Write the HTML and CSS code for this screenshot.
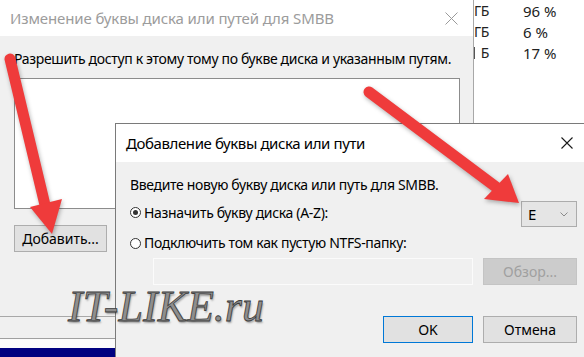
FILE: index.html
```html
<!DOCTYPE html>
<html lang="ru">
<head>
  <meta charset="UTF-8">
  <meta name="viewport" content="width=device-width, initial-scale=1.0">
  <title>Добавление буквы диска или пути</title>
  <link rel="stylesheet" href="styles.css">
</head>
<body>
  <div class="desk">
    <!-- Таблица дисков на заднем плане -->
    <div class="disk-table">
      <div class="disk-row"><span class="size">ГБ</span><span class="pct">96 %</span></div>
      <div class="disk-row"><span class="size">ГБ</span><span class="pct">6 %</span></div>
      <div class="disk-row"><span class="size cut">Б</span><span class="pct">17 %</span></div>
    </div>

    <div class="desk-bottom">
      <div class="strip-gray"></div>
      <div class="strip-line"></div>
      <div class="strip-white"></div>
      <div class="strip-navy"></div>
    </div>

    <!-- Первое окно -->
    <div class="dlg dlg-paths">
      <div class="titlebar">
        <span class="title">Изменение буквы диска или путей для SMBB</span>
        <svg class="close" width="13" height="13" viewBox="0 0 13 13"><path d="M0.5 0.5L12.5 12.5M12.5 0.5L0.5 12.5" stroke="#9a9a9a" stroke-width="1" fill="none"/></svg>
      </div>
      <div class="dlg-body">
        <p class="label">Разрешить доступ к этому тому по букве диска и указанным путям.</p>
        <div class="listbox"></div>
        <button class="btn btn-add">Добавить...</button>
      </div>
    </div>

    <!-- Второе окно -->
    <div class="dlg dlg-add">
      <div class="titlebar">
        <span class="title">Добавление буквы диска или пути</span>
        <svg class="close" width="12" height="12" viewBox="0 0 12 12"><path d="M0.5 0.5L11.5 11.5M11.5 0.5L0.5 11.5" stroke="#1a1a1a" stroke-width="1.1" fill="none"/></svg>
      </div>
      <div class="dlg-body">
        <p class="label">Введите новую букву диска или путь для SMBB.</p>
        <div class="opt-row">
          <label class="radio"><span class="dot checked"></span>Назначить букву диска (A-Z):</label>
          <div class="select">
            <span>E</span>
            <svg width="8" height="5" viewBox="0 0 8 5"><path d="M0.5 0.5L4 4L7.5 0.5" stroke="#8a8a8a" fill="none"/></svg>
          </div>
        </div>
        <div class="opt-row2">
          <label class="radio"><span class="dot"></span>Подключить том как пустую NTFS-папку:</label>
        </div>
        <div class="path-row">
          <div class="path-input"></div>
          <button class="btn btn-disabled">Обзор...</button>
        </div>
        <div class="actions">
          <button class="btn btn-ok">OK</button>
          <button class="btn btn-cancel">Отмена</button>
        </div>
      </div>
    </div>

    <div class="watermark">IT-LIKE.ru</div>

    <svg class="arrows" width="584" height="357" viewBox="0 0 584 357">
      <g class="arrow">
        <line x1="10" y1="59" x2="45" y2="205" stroke="#ef3b3b" stroke-width="11" stroke-linecap="round"/>
        <polygon points="30,207 62,199 52,234" fill="#ef3b3b"/>
      </g>
      <g class="arrow">
        <line x1="369" y1="92" x2="496" y2="187" stroke="#ef3b3b" stroke-width="11" stroke-linecap="round"/>
        <polygon points="484,199 508,174 519,203" fill="#ef3b3b"/>
      </g>
    </svg>
  </div>
</body>
</html>
```

FILE: styles.css
```css
* {
  box-sizing: border-box;
  margin: 0;
  padding: 0;
}

body {
  width: 584px;
  height: 357px;
  overflow: hidden;
  background-color: #fff;
  font-family: "Noto Sans", sans-serif;
  font-size: 14px;
  color: #000;
}

.desk {
  position: relative;
  width: 584px;
  height: 357px;
}

/* Фон: таблица дисков (левая часть скрыта за окном) */
.disk-table {
  position: absolute;
  left: 474px;
  top: 0;
  width: 110px;
  font-size: 15px;
  color: #222;
}

.disk-row {
  display: flex;
  height: 21px;
  align-items: center;
}

.disk-row .size {
  width: 15px;
  flex-shrink: 0;
  font-size: 14px;
  letter-spacing: -0.3px;
  text-align: right;
  white-space: nowrap;
}

.disk-row .cut {
  border-left: 1px solid #555;
  height: 12px;
  line-height: 12px;
}

.disk-row .pct {
  margin-left: 34px;
}

.desk-bottom {
  position: absolute;
  left: 0;
  top: 317px;
  width: 130px;
  display: flex;
  flex-direction: column;
}

.strip-gray {
  height: 21px;
  background-color: #f0f0f0;
}

.strip-line {
  height: 1px;
  background-color: #a0a0a0;
}

.strip-white {
  height: 9px;
  background-color: #fbfbfb;
}

.strip-navy {
  height: 12px;
  background-color: #000080;
}

/* Окна */
.dlg {
  position: absolute;
  display: flex;
  flex-direction: column;
  background-color: #f0f0f0;
}

.titlebar {
  display: flex;
  align-items: center;
  background-color: #fff;
  padding-left: 10px;
}

.titlebar .title {
  font-size: 15px;
}

.titlebar .close {
  margin-left: auto;
}

.dlg-paths {
  left: -1px;
  top: -1px;
  width: 475px;
  height: 318px;
  border: 1px solid #a8a8a8;
}

.dlg-paths .titlebar {
  height: 36px;
}

.dlg-paths .title {
  color: #9c9c9c;
  letter-spacing: -0.12px;
}

.dlg-paths .close {
  margin-right: 15px;
}

.dlg-paths .dlg-body {
  padding: 14px 0 0 14px;
  display: flex;
  flex-direction: column;
  align-items: flex-start;
}

.label {
  line-height: 18px;
  font-size: 14px;
  letter-spacing: -0.34px;
}

.listbox {
  margin-top: 10px;
  width: 446px;
  height: 131px;
  background-color: #fff;
  border: 1px solid #8c8c8c;
}

.btn {
  font-family: "Noto Sans", sans-serif;
  font-size: 14px;
  height: 27px;
  background-color: #e1e1e1;
  border: 1px solid #adadad;
  color: #000;
}

.btn-add {
  margin-top: 16px;
  width: 93px;
}

.dlg-add {
  left: 115px;
  top: 123px;
  width: 477px;
  height: 250px;
  border: 1px solid #7a7a7a;
}

.dlg-add .titlebar {
  height: 38px;
}

.dlg-add .title {
  letter-spacing: -0.4px;
}

.dlg-add .close {
  margin-right: 18px;
}

.dlg-add .dlg-body {
  padding: 14px 14px 0 14px;
  display: flex;
  flex-direction: column;
}

.opt-row {
  margin-top: 7px;
  height: 26px;
  display: flex;
  align-items: center;
  justify-content: space-between;
}

.opt-row2 {
  margin-top: 7px;
  height: 18px;
  display: flex;
  align-items: center;
}

.radio {
  display: flex;
  align-items: center;
  gap: 3px;
  line-height: 18px;
  font-size: 14px;
  letter-spacing: -0.34px;
}

.opt-row .radio {
  margin-top: -3px;
}

.dot {
  width: 11px;
  height: 11px;
  border: 1px solid #333;
  border-radius: 50%;
  background-color: #fff;
  position: relative;
  flex-shrink: 0;
}

.dot.checked::after {
  content: "";
  position: absolute;
  left: 2px;
  top: 2px;
  width: 5px;
  height: 5px;
  border-radius: 50%;
  background-color: #333;
}

.select {
  width: 56px;
  height: 26px;
  background-color: #e5e5e5;
  border: 1px solid #acacac;
  display: flex;
  align-items: center;
  justify-content: space-between;
  padding: 0 8px 0 6px;
  font-size: 15px;
}

.path-row {
  margin-top: 6px;
  display: flex;
  gap: 10px;
  padding-left: 23px;
}

.path-input {
  width: 320px;
  height: 27px;
  background-color: #f0f0f0;
  border: 1px solid #fbfbfb;
}

.btn-disabled {
  width: 94px;
  background-color: #cccccc;
  border-color: #c4c4c4;
  color: #a0a0a0;
}

.actions {
  margin-top: 31px;
  display: flex;
  justify-content: flex-end;
  gap: 10px;
}

.btn-ok {
  width: 90px;
  border-color: #0078d7;
}

.btn-cancel {
  width: 94px;
}

/* Водяной знак */
.watermark {
  position: absolute;
  left: 68px;
  top: 285px;
  font-family: "Liberation Serif", serif;
  font-style: italic;
  font-size: 44px;
  line-height: 1;
  color: #8e8e8e;
  -webkit-text-stroke: 0.8px #3a3a3a;
  text-shadow: 1px 2px 2px rgba(0, 0, 0, 0.35);
}

.arrows {
  position: absolute;
  left: 0;
  top: 0;
  pointer-events: none;
}

.arrow {
  filter: drop-shadow(1px 2px 2px rgba(0, 0, 0, 0.3));
}
```
